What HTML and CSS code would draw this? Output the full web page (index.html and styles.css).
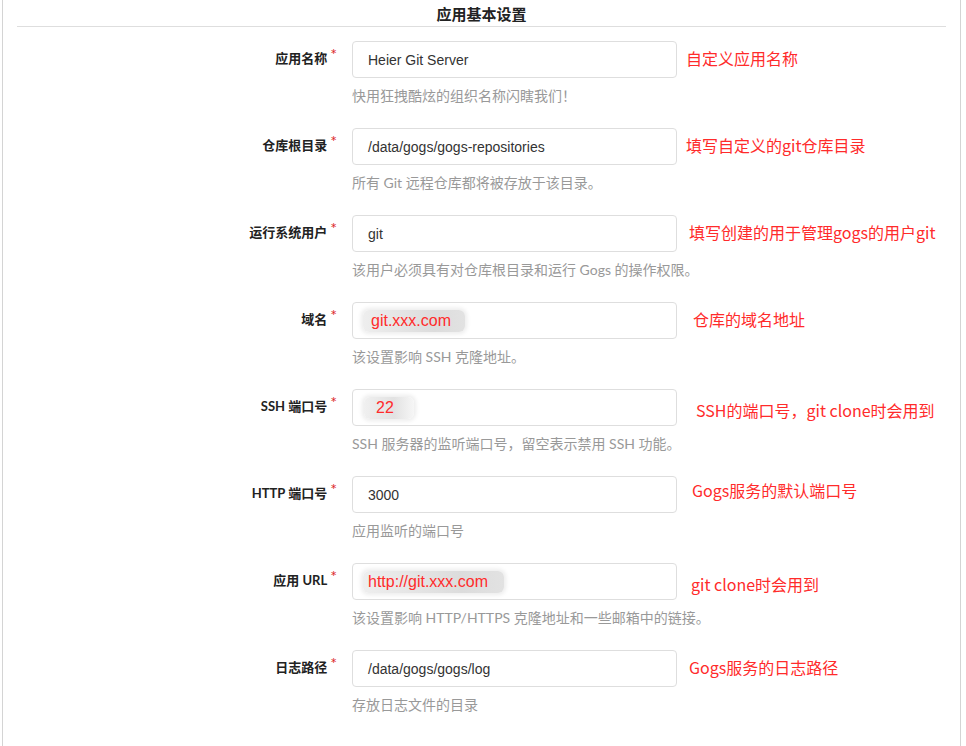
FILE: index.html
```html
<!DOCTYPE html>
<html lang="zh-CN">
<head>
<meta charset="utf-8">
<title>应用基本设置</title>
<link rel="stylesheet" href="styles.css">
</head>
<body>
<div class="panel">
  <h3 class="title">应用基本设置</h3>
  <div class="form">
    <div class="field">
      <div class="row">
        <label class="label">应用名称<span class="req">*</span></label>
        <div class="input">Heier Git Server</div>
        <span class="note m9">自定义应用名称</span>
      </div>
      <div class="help">快用狂拽酷炫的组织名称闪瞎我们！</div>
    </div>
    <div class="field">
      <div class="row">
        <label class="label">仓库根目录<span class="req">*</span></label>
        <div class="input">/data/gogs/gogs-repositories</div>
        <span class="note m9">填写自定义的git仓库目录</span>
      </div>
      <div class="help">所有 Git 远程仓库都将被存放于该目录。</div>
    </div>
    <div class="field">
      <div class="row">
        <label class="label">运行系统用户<span class="req">*</span></label>
        <div class="input">git</div>
        <span class="note m12">填写创建的用于管理gogs的用户git</span>
      </div>
      <div class="help">该用户必须具有对仓库根目录和运行 Gogs 的操作权限。</div>
    </div>
    <div class="field">
      <div class="row">
        <label class="label">域名<span class="req">*</span></label>
        <div class="input"><span class="redact r-domain">git.xxx.com</span></div>
        <span class="note m16">仓库的域名地址</span>
      </div>
      <div class="help">该设置影响 SSH 克隆地址。</div>
    </div>
    <div class="field">
      <div class="row">
        <label class="label">SSH 端口号<span class="req">*</span></label>
        <div class="input"><span class="redact r-port">22</span></div>
        <span class="note m19 low">SSH的端口号，git clone时会用到</span>
      </div>
      <div class="help">SSH 服务器的监听端口号，留空表示禁用 SSH 功能。</div>
    </div>
    <div class="field">
      <div class="row">
        <label class="label">HTTP 端口号<span class="req">*</span></label>
        <div class="input">3000</div>
        <span class="note m15 high">Gogs服务的默认端口号</span>
      </div>
      <div class="help">应用监听的端口号</div>
    </div>
    <div class="field">
      <div class="row">
        <label class="label">应用 URL<span class="req">*</span></label>
        <div class="input"><span class="redact r-url">http://git.xxx.com</span></div>
        <span class="note m14 low">git clone时会用到</span>
      </div>
      <div class="help">该设置影响 HTTP/HTTPS 克隆地址和一些邮箱中的链接。</div>
    </div>
    <div class="field">
      <div class="row">
        <label class="label">日志路径<span class="req">*</span></label>
        <div class="input">/data/gogs/gogs/log</div>
        <span class="note m12">Gogs服务的日志路径</span>
      </div>
      <div class="help">存放日志文件的目录</div>
    </div>
  </div>
</div>
</body>
</html>
```

FILE: styles.css
```css
html, body {
  margin: 0;
  padding: 0;
  background: #fff;
}

body {
  font-family: Lato, "Noto Sans CJK SC", sans-serif;
  color: #333;
}

.panel {
  margin-left: 2px;
  width: 959px;
  min-height: 746px;
  border-left: 1px solid #d4d4d4;
  border-right: 1px solid #d4d4d4;
  box-sizing: border-box;
}

.title {
  margin: 0 14px;
  height: 27px;
  box-sizing: border-box;
  padding-top: 4px;
  border-bottom: 1px solid #dedede;
  text-align: center;
  font-family: "Noto Sans CJK SC", sans-serif;
  font-size: 15px;
  font-weight: 700;
  line-height: 20px;
  color: #222;
}

.form {
  padding-top: 14px;
}

.field {
  height: 87px;
}

.row {
  display: flex;
  align-items: center;
  height: 37px;
}

.label {
  width: 334px;
  padding-right: 15px;
  padding-bottom: 3px;
  box-sizing: content-box;
  text-align: right;
  font-size: 13px;
  font-weight: 700;
  color: #222;
  line-height: 18px;
  flex-shrink: 0;
}

.req {
  color: #db2828;
  font-weight: 400;
  font-size: 16px;
  line-height: 10px;
  vertical-align: 3px;
  margin-left: 3px;
}

.input {
  width: 325px;
  height: 37px;
  box-sizing: border-box;
  border: 1px solid #dedede;
  border-radius: 4px;
  padding: 0 15px;
  display: flex;
  align-items: center;
  font-family: "Liberation Sans", Arial, sans-serif;
  font-size: 14px;
  color: #333;
  flex-shrink: 0;
}

.redact {
  color: #ff2b2b;
  font-size: 16px;
  line-height: 20px;
  background: linear-gradient(to right, #eeeeee, #dcdcdc 70%, #e2e2e2);
  box-shadow: 0 0 4px 2px #ececec;
  border-radius: 6px;
}

.r-domain {
  margin-left: -5px;
  padding: 1px 14px 1px 8px;
}

.r-port {
  margin-left: -4px;
  padding: 1px 20px 1px 12px;
  background: linear-gradient(to right, #f0f0f0, #e2e2e2 60%, #f6f6f6);
}

.r-url {
  margin-left: -5px;
  padding: 1px 16px 1px 5px;
}

.note {
  font-family: "Noto Sans CJK SC", sans-serif;
  font-size: 16px;
  color: #ff2b2b;
  line-height: 20px;
  white-space: nowrap;
  padding-bottom: 4px;
}

.low { padding-top: 4px; padding-bottom: 0; }
.high { padding-bottom: 9px; }

.m9 { margin-left: 9px; }
.m12 { margin-left: 12px; }
.m14 { margin-left: 14px; }
.m15 { margin-left: 15px; }
.m16 { margin-left: 16px; }
.m19 { margin-left: 19px; }

.help {
  margin-top: 9px;
  margin-left: 349px;
  font-size: 14px;
  line-height: 18px;
  color: #999;
}
```
